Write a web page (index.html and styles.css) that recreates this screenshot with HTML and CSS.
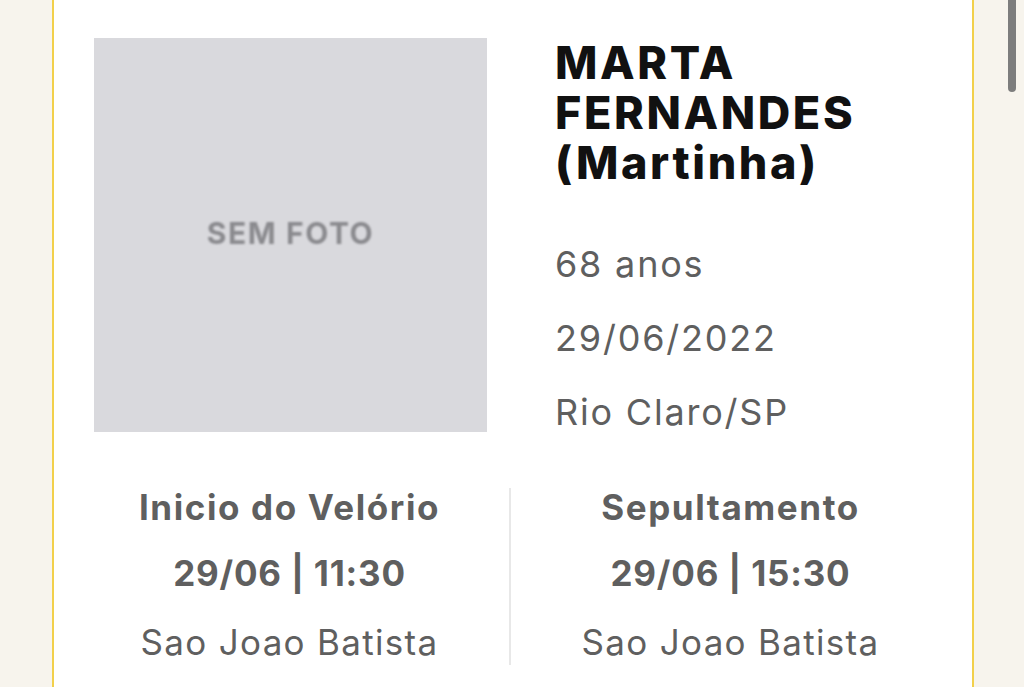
FILE: index.html
```html
<!DOCTYPE html>
<html lang="pt-BR">
<head>
    <meta charset="UTF-8">
    <meta name="viewport" content="width=device-width, initial-scale=1.0">
    <title>Falecimento - Marta Fernandes</title>
    <link rel="stylesheet" href="styles.css">
</head>
<body>
    <div class="page">
        <div class="card">
            <div class="profile">
                <div class="photo">
                    <span class="photo-label">SEM FOTO</span>
                </div>
                <div class="details">
                    <h1 class="name">MARTA FERNANDES (Martinha)</h1>
                    <p class="info">68 anos</p>
                    <p class="info">29/06/2022</p>
                    <p class="info">Rio Claro/SP</p>
                </div>
            </div>
            <div class="events">
                <div class="event">
                    <h3>Inicio do Velório</h3>
                    <p class="when">29/06 | 11:30</p>
                    <p class="where">Sao Joao Batista</p>
                </div>
                <div class="divider"></div>
                <div class="event">
                    <h3>Sepultamento</h3>
                    <p class="when">29/06 | 15:30</p>
                    <p class="where">Sao Joao Batista</p>
                </div>
            </div>
        </div>
    </div>
    <div class="scroll-thumb"></div>
</body>
</html>
```

FILE: styles.css
```css
body {
    font-family: 'Inter', 'Open Sans', sans-serif;
    margin: 0;
    padding: 0;
    background-color: #f7f4ed;
    overflow: hidden;
    height: 687px;
}
.page {
    padding: 0 50px 0 52px;
}
.card {
    background: #fff;
    border-left: 2px solid #f2d04b;
    border-right: 2px solid #f2d04b;
    padding: 38px 40px 40px 40px;
    min-height: 700px;
}
.profile {
    display: flex;
    gap: 68px;
}
.photo {
    width: 393px;
    height: 394px;
    flex-shrink: 0;
    background-color: #d9d9dd;
    display: flex;
    align-items: center;
    justify-content: center;
}
.photo-label {
    font-size: 30px;
    font-weight: 700;
    color: #8a8a8e;
    letter-spacing: 1.6px;
    filter: blur(0.8px);
    margin-top: -4px;
}
.name {
    margin: 0;
    font-size: 45px;
    line-height: 50px;
    font-weight: 800;
    color: #111;
    letter-spacing: 2.6px;
    width: 360px;
}
.info {
    margin: 0;
    font-size: 36px;
    line-height: 74px;
    color: #5f5f5f;
    letter-spacing: 1.8px;
}
.name + .info {
    margin-top: 39px;
}
.events {
    display: flex;
    justify-content: center;
    margin: 38px -18px 0 -24px;
}
.event {
    flex: 1;
    text-align: center;
    color: #5f5f5f;
}
.event h3 {
    margin: 0;
    font-size: 35px;
    line-height: 40px;
    font-weight: 700;
    letter-spacing: 1.6px;
}
.when {
    margin: 26px 0 0 0;
    font-size: 35px;
    line-height: 40px;
    font-weight: 700;
    letter-spacing: 0.8px;
}
.where {
    margin: 29px 0 0 0;
    font-size: 35px;
    line-height: 40px;
    letter-spacing: 1.3px;
}
.divider {
    width: 2px;
    height: 177px;
    flex-shrink: 0;
    align-self: flex-start;
    background-color: #e8e8e8;
    margin-top: 1px;
}
.scroll-thumb {
    position: absolute;
    top: -6px;
    left: 1008px;
    width: 8px;
    height: 98px;
    border-radius: 4px;
    background-color: #7d7d7d;
}
```
